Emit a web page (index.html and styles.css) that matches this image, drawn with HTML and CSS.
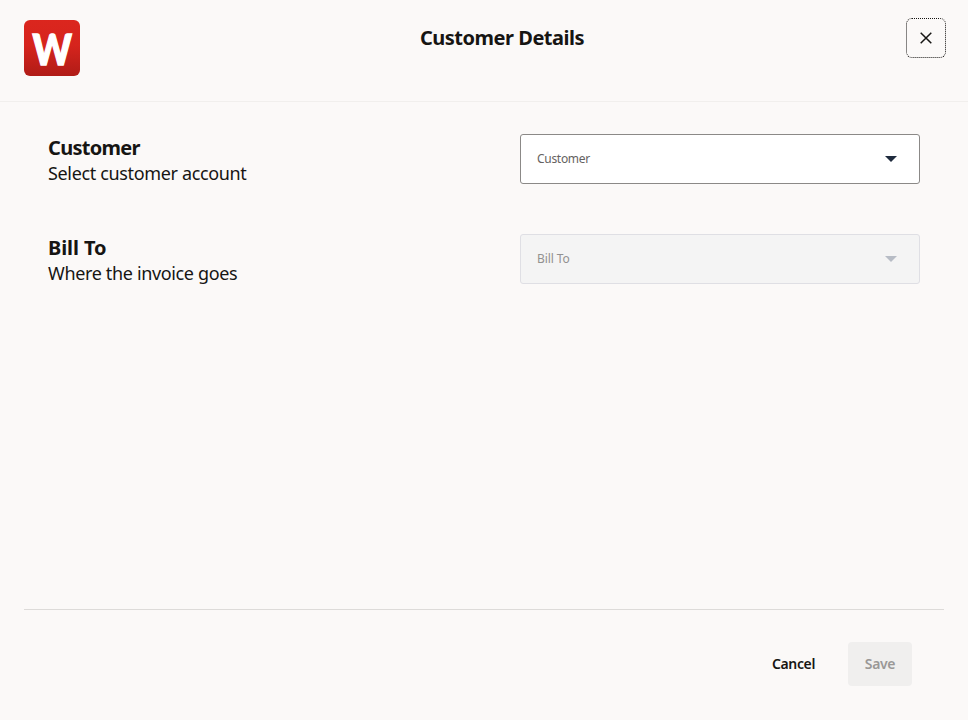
FILE: index.html
```html
<!DOCTYPE html>
<html lang="en">
<head>
<meta charset="utf-8">
<title>Customer Details</title>
<link rel="stylesheet" href="styles.css">
</head>
<body>
<div class="dialog">
  <header class="header">
    <svg class="logo" viewBox="0 0 56 56" role="img" aria-label="W">
      <defs>
        <linearGradient id="logo-red" x1="0" y1="0" x2="0" y2="1">
          <stop offset="0" stop-color="#db261e"/>
          <stop offset=".45" stop-color="#d6241d"/>
          <stop offset="1" stop-color="#b01c17"/>
        </linearGradient>
      </defs>
      <rect width="56" height="56" rx="6" fill="url(#logo-red)"/>
      <text class="logo-letter" x="8.6" y="45" textLength="39.4" lengthAdjust="spacingAndGlyphs">W</text>
    </svg>
    <h1 class="title">Customer Details</h1>
    <button class="close" type="button" aria-label="Close">
      <svg width="12" height="12" viewBox="0 0 12 12"><path d="M.7.7l10.6 10.6M11.3.7L.7 11.3" stroke="#161513" stroke-width="1.5"/></svg>
    </button>
  </header>
  <main class="content">
    <section class="row">
      <div>
        <h2 class="row-title customer-title">Customer</h2>
        <p class="row-text">Select customer account</p>
      </div>
      <div class="select">
        <span class="select-label">Customer</span>
        <svg class="arrow" width="12" height="6" viewBox="0 0 12 6"><path d="M0 0h12L6 6z"/></svg>
      </div>
    </section>
    <section class="row">
      <div>
        <h2 class="row-title bill-title">Bill To</h2>
        <p class="row-text">Where the invoice goes</p>
      </div>
      <div class="select disabled">
        <span class="select-label">Bill To</span>
        <svg class="arrow" width="12" height="6" viewBox="0 0 12 6"><path d="M0 0h12L6 6z"/></svg>
      </div>
    </section>
  </main>
  <footer class="footer">
    <button class="button cancel" type="button">Cancel</button>
    <button class="button save" type="button" disabled>Save</button>
  </footer>
</div>
</body>
</html>
```
FILE: styles.css
```css
* { box-sizing: border-box; }
body {
  margin: 0;
  background: #fbf9f8;
  color: #161513;
  font-family: "Noto Sans", "Open Sans", sans-serif;
}
h1, h2, p { margin: 0; }
button { font-family: inherit; padding: 0; border: 0; background: none; }
svg { display: block; }
.dialog { height: 720px; display: flex; flex-direction: column; }
.header {
  height: 102px;
  flex: none;
  display: grid;
  grid-template-columns: 56px 1fr 40px;
  align-items: start;
  padding: 18px 22px 0 24px;
  border-bottom: 1px solid #f1efed;
}
.logo { width: 56px; height: 56px; margin-top: 2px; overflow: visible; }
.logo-letter { font: 900 42px Lato, sans-serif; fill: #fff; stroke: #fff; stroke-width: 1.4px; }
.title {
  padding-left: 18px;
  text-align: center;
  font-size: 20px;
  line-height: 40px;
  letter-spacing: -0.48px;
}
.close {
  width: 40px;
  height: 40px;
  border: 1px dotted #161513;
  border-radius: 6px;
  display: grid;
  place-items: center;
  color: #161513;
}
.content {
  flex: 1;
  padding: 32px 48px 0;
  display: flex;
  flex-direction: column;
  gap: 50px;
}
.row { display: grid; grid-template-columns: 1fr 400px; height: 50px; }
.row-title { font-size: 20px; line-height: 28px; }
.customer-title { letter-spacing: -0.7px; }
.bill-title { letter-spacing: -0.1px; }
.row-text { font-size: 18px; line-height: 22px; letter-spacing: -0.35px; }
.select {
  height: 50px;
  border: 1px solid #8b8987;
  border-radius: 3px;
  background: #fff;
  display: flex;
  align-items: center;
  justify-content: space-between;
  padding: 0 22px 0 16px;
}
.select-label { font-size: 12px; line-height: 16px; color: #65625f; letter-spacing: -0.3px; }
.arrow { fill: #1f2b3d; }
.disabled { background: #f4f4f4; border-color: #dfdfe4; }
.disabled .select-label { color: #929190; letter-spacing: -0.1px; }
.disabled .arrow { fill: #b7bcc5; }
.footer {
  height: 111px;
  flex: none;
  margin: 0 24px;
  padding: 32px 32px 0 0;
  border-top: 1px solid #dddbd9;
  display: flex;
  justify-content: flex-end;
  gap: 16px;
}
.button {
  height: 44px;
  border-radius: 4px;
  font-size: 14px;
  font-weight: 600;
  line-height: 20px;
  letter-spacing: -0.35px;
}
.cancel { width: 77px; color: #161513; }
.save { width: 64px; background: #f0efee; color: #9a9896; }
```
